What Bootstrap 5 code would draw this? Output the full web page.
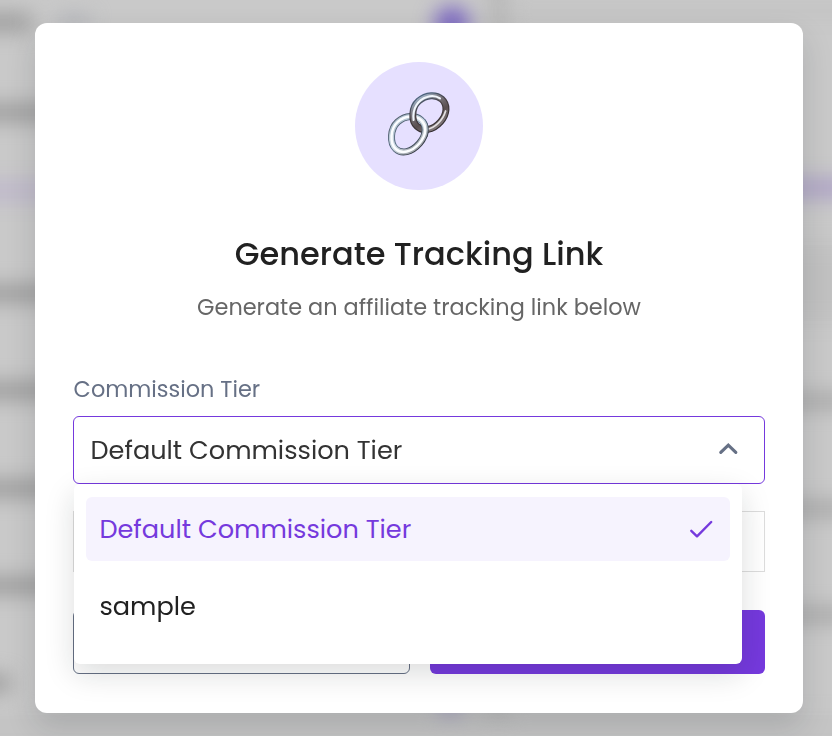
<!DOCTYPE html>
<html lang="en">
<head>
<meta charset="utf-8">
<meta name="viewport" content="width=device-width, initial-scale=1">
<title>Generate Tracking Link</title>
<link href="https://cdn.jsdelivr.net/npm/bootstrap@5.3.0/dist/css/bootstrap.min.css" rel="stylesheet">
<style>
body{font-family:Poppins,Inter,sans-serif;background:#c6c6c6;height:736px;overflow:hidden}
.backdrop-art{position:fixed;inset:0;width:832px;height:736px}
.dialog-panel{position:relative;width:768px;height:690px;margin:23px 0 0 35px;padding:39px 38px;background:#fff;border-radius:12px;box-shadow:0 14px 30px rgba(20,25,35,.15)}
.link-badge{width:128px;height:128px;background:#e6e0ff}
.dialog-title{font-size:32px;font-weight:500;line-height:48px;color:#212121;margin-top:40px;white-space:nowrap}
.dialog-sub{font-size:22.4px;line-height:34px;color:#666;margin-top:12px;white-space:nowrap}
.tier-label{font-size:22.4px;line-height:34px;color:#667085;margin-top:48px;padding-left:.6px;white-space:nowrap}
.tier-select{height:68px;margin-top:10px;padding:0 25px 0 16.5px;border:1px solid #7539dd;border-radius:6px;font-size:25.6px;color:#333;background:#fff;white-space:nowrap}
.link-field{height:61px;margin-top:27px;border:1px solid #ddd}
.actions-row{margin-top:38px;gap:20px}
.action-btn{height:64px;border-radius:6px}
.action-btn.cancel{width:337px;border:1px solid #667085;background:#fff}
.action-btn.submit{width:335px;background:#7539dd;border:0}
.tier-menu{position:absolute;top:461px;left:39px;width:668px;height:180px;padding:13px 12px;background:#fff;border-radius:6px;box-shadow:0 10px 30px rgba(20,30,30,.15);font-size:25.6px;white-space:nowrap}
.tier-option{height:64px;padding:0 16px 0 13.4px;border-radius:6px;color:#212121}
.tier-option + .tier-option{margin-top:13px}
.tier-option.chosen{background:#f6f3fe;color:#7539dd}
</style>
<script src="https://cdn.jsdelivr.net/npm/bootstrap@5.3.0/dist/js/bootstrap.bundle.min.js"></script>
</head>
<body>
<svg class="backdrop-art" viewBox="0 0 832 736" aria-hidden="true">
  <defs><filter id="haze" x="-50%" y="-50%" width="200%" height="200%" color-interpolation-filters="sRGB"><feGaussianBlur stdDeviation="10"/></filter></defs>
  <rect width="832" height="736" fill="#c9c9c9"/>
  <g filter="url(#haze)">
    <g fill="#999">
      <rect x="-60" y="14" width="92" height="17"/><rect x="-60" y="104" width="120" height="17"/>
      <rect x="-60" y="285" width="120" height="17"/><rect x="-60" y="382" width="120" height="17"/>
      <rect x="-60" y="480" width="120" height="17"/><rect x="-60" y="577" width="120" height="17"/>
      <rect x="-60" y="675" width="70" height="17"/>
    </g>
    <rect x="58" y="15" width="32" height="14" fill="#b0b2b8"/>
    <rect x="-60" y="181" width="120" height="20" fill="#beb8cb"/>
    <circle cx="452" cy="24" r="18" fill="#7c68c2"/>
    <circle cx="450" cy="704" r="12" fill="#a5a1c2"/>
    <rect x="488" y="-30" width="20" height="800" fill="#b8b8b8"/>
    <rect x="510" y="8" width="400" height="6" fill="#bbb"/>
    <rect x="780" y="178" width="100" height="20" fill="#aea3c6"/>
    <rect x="780" y="245" width="100" height="76" fill="#c1c1c1"/>
    <rect x="780" y="394" width="100" height="14" fill="#a4a4a4"/>
    <rect x="780" y="502" width="100" height="14" fill="#a4a4a4"/>
    <rect x="780" y="608" width="100" height="14" fill="#a4a4a4"/>
    <rect x="-40" y="715" width="920" height="60" fill="#c3c3c3"/>
  </g>
</svg>
<main class="dialog-panel d-flex flex-column">
  <div class="link-badge rounded-circle align-self-center flex-shrink-0">
    <svg width="128" height="128" viewBox="355 62 128 128" aria-hidden="true">
      <defs>
        <linearGradient id="edgeA" gradientUnits="userSpaceOnUse" x1="420" y1="92" x2="440" y2="134"><stop offset="0" stop-color="#4f6d8d"/><stop offset=".4" stop-color="#453c3e"/><stop offset="1" stop-color="#2f2b2e"/></linearGradient>
        <linearGradient id="metalA" gradientUnits="userSpaceOnUse" x1="417" y1="94" x2="442" y2="132"><stop offset="0" stop-color="#a9c4dd"/><stop offset=".3" stop-color="#7d7a82"/><stop offset=".6" stop-color="#5a4e50"/><stop offset="1" stop-color="#969092"/></linearGradient>
        <linearGradient id="metalB" gradientUnits="userSpaceOnUse" x1="392" y1="116" x2="424" y2="153"><stop offset="0" stop-color="#9fb2c4"/><stop offset=".5" stop-color="#cdd9e2"/><stop offset="1" stop-color="#86868a"/></linearGradient>
        <linearGradient id="edgeB" gradientUnits="userSpaceOnUse" x1="392" y1="116" x2="424" y2="153"><stop offset="0" stop-color="#4d5660"/><stop offset=".5" stop-color="#566d84"/><stop offset="1" stop-color="#242124"/></linearGradient>
        <clipPath id="overlap"><path d="M421 119h14v18h-14z"/></clipPath>
        <path id="lowerPath" d="M397.7 121.9C405.5 115.1 415.4 115.2 420.9 119.9C427.1 125.3 426.6 134.8 419.5 143.3C411.4 152.6 401.5 154.2 395.8 149C389.4 143.1 390.2 128.7 397.7 121.9Z"/>
        <path id="upperPath" d="M418.5 101.1C426.4 94.2 436.3 94.3 441.8 99.2C447.8 104.7 447.3 114 440.6 121.7C432.6 130.8 422.8 131.5 417 126.3C411 120.9 411.3 107.5 418.5 101.1Z"/>
      </defs>
      <g id="lowerRing" fill="none">
        <use href="#lowerPath" stroke="url(#edgeB)" stroke-width="7"/>
        <use href="#lowerPath" stroke="url(#metalB)" stroke-width="5.2"/>
        <use href="#lowerPath" stroke="#fbfdff" stroke-width="2.5"/>
      </g>
      <g fill="none">
        <use href="#upperPath" stroke="url(#edgeA)" stroke-width="7"/>
        <use href="#upperPath" stroke="url(#metalA)" stroke-width="4.6"/>
        <path d="M413.6 120C412 109 418 99.5 427 96.9C431.5 95.4 436.5 96 440 98.3" stroke="#f2f7fc" stroke-width="2.1" stroke-linecap="round"/>
        <path d="M427 129.3C435 127.8 442.8 120.5 445.6 111" stroke="#e2dfe0" stroke-width="1.8" stroke-linecap="round"/>
      </g>
      <use href="#lowerRing" clip-path="url(#overlap)"/>
    </svg>
  </div>
  <h1 class="dialog-title text-center mb-0"><span>Generate Tracking Link</span></h1>
  <p class="dialog-sub text-center mb-0"><span>Generate an affiliate tracking link below</span></p>
  <div class="tier-label"><span>Commission Tier</span></div>
  <div class="tier-select d-flex align-items-center justify-content-between flex-shrink-0">
    <span>Default Commission Tier</span>
    <svg width="22" height="16" viewBox="0 0 22 16" fill="none" stroke="#667085" stroke-width="3.2" aria-hidden="true"><path d="M3.8 10.3 11.3 3.1l7.5 7.2" stroke-linecap="round" stroke-linejoin="miter"/></svg>
  </div>
  <div class="link-field flex-shrink-0"></div>
  <div class="actions-row d-flex">
    <button class="action-btn cancel" type="button" aria-label="Cancel"></button>
    <button class="action-btn submit" type="button" aria-label="Generate"></button>
  </div>
  <div class="tier-menu">
    <div class="tier-option chosen d-flex align-items-center justify-content-between">
      <span>Default Commission Tier</span>
      <svg width="26" height="20" viewBox="0 0 26 20" fill="none" stroke="#7539dd" stroke-width="2.4" stroke-linecap="round" stroke-linejoin="round" aria-hidden="true"><path d="M3.3 11.8 9 17.3 23.2 3"/></svg>
    </div>
    <div class="tier-option d-flex align-items-center"><span>sample</span></div>
  </div>
</main>
</body>
</html>
